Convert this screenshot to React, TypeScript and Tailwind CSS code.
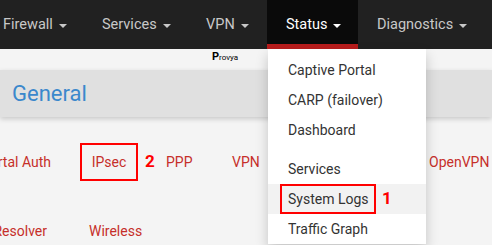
import React from "react";

const navItems = [
  { label: "Firewall", width: "w-[99px]", active: false },
  { label: "Services", width: "w-[104px]", active: false },
  { label: "VPN", width: "w-[80px]", active: false },
  { label: "Status", width: "w-[91px]", active: true },
  { label: "Diagnostics", width: "w-[140px]", active: false },
];

function Caret({ light }: { light?: boolean }) {
  return (
    <span
      className={`ml-[6px] mt-[2px] inline-block h-0 w-0 border-x-[4px] border-t-[4px] border-x-transparent ${
        light ? "border-t-white" : "border-t-[#c8c8c8]"
      }`}
    />
  );
}

export default function App() {
  return (
    <div className="relative h-[245px] w-[492px] overflow-hidden bg-[#f4f4f4] font-['Roboto','Liberation_Sans',sans-serif]">
      {/* top navbar */}
      <nav className="flex h-[49px] bg-[#212121]">
        <div className="ml-[-16px] flex">
          {navItems.map((item) => (
            <div
              key={item.label}
              className={`flex shrink-0 items-center pl-[19px] text-[14.5px] ${item.width} ${
                item.active
                  ? "bg-[#0a0a0a] text-white shadow-[inset_0_-5px_0_#b71c1c]"
                  : "text-[#c8c8c8]"
              }`}
            >
              {item.label}
              <Caret light={item.active} />
            </div>
          ))}
        </div>
      </nav>

      {/* page content */}
      <div className="pt-[21px]">
        <div className="flex h-[47px] items-center bg-[#e0e0e0] pl-[12px] text-[22px] text-[#3b88cc] shadow-[0_2px_5px_rgba(0,0,0,0.18)]">
          General
        </div>

        <div className="mt-[26px] flex h-[38px] items-center text-[14px] text-[#c62f2a]">
          <div className="flex w-[51px] justify-end overflow-hidden whitespace-nowrap">
            Captive Portal Auth
          </div>
          <div className="ml-[29px] flex h-[38px] w-[58px] items-center justify-center border-2 border-[#ff0000]">
            IPsec
          </div>
          <div className="ml-[7px] w-[21px] text-[17px] font-bold text-[#ff0000]">2</div>
          <div className="w-[66px]">PPP</div>
          <div className="w-[197px] whitespace-nowrap">VPN</div>
          <div>OpenVPN</div>
        </div>

        <div className="mt-[31px] flex h-[38px] items-center text-[14px] text-[#c62f2a]">
          <div className="flex w-[47px] justify-end overflow-hidden whitespace-nowrap">
            DNS Resolver
          </div>
          <div className="ml-[42px]">Wireless</div>
        </div>
      </div>

      {/* watermark */}
      <div className="absolute left-[212px] top-[51px] flex items-end leading-none text-black">
        <span className="text-[11px] font-bold">P</span>
        <span className="text-[8px]">rovya</span>
      </div>

      {/* Status dropdown */}
      <div className="absolute left-[268px] top-[49px] w-[158px] bg-white pt-[6px] text-[14px] text-[#333] shadow-[0_6px_12px_rgba(0,0,0,0.2)]">
        <div className="flex h-[30px] items-center whitespace-nowrap pl-[20px]">Captive Portal</div>
        <div className="flex h-[30px] items-center whitespace-nowrap pl-[20px]">CARP (failover)</div>
        <div className="flex h-[30px] items-center whitespace-nowrap pl-[20px]">Dashboard</div>
        <div className="h-[9px]" />
        <div className="flex h-[30px] items-center whitespace-nowrap pl-[20px]">Services</div>
        <div className="flex h-[30px] items-center bg-[#f2f2f2] pl-[12px]">
          <div className="flex h-[30px] w-[96px] items-center whitespace-nowrap border-2 border-[#ff0000] pl-[6px]">
            System Logs
          </div>
          <span className="ml-[6px] text-[17px] font-bold text-[#ff0000]">1</span>
        </div>
        <div className="flex h-[30px] items-center whitespace-nowrap pl-[20px]">Traffic Graph</div>
      </div>
    </div>
  );
}
